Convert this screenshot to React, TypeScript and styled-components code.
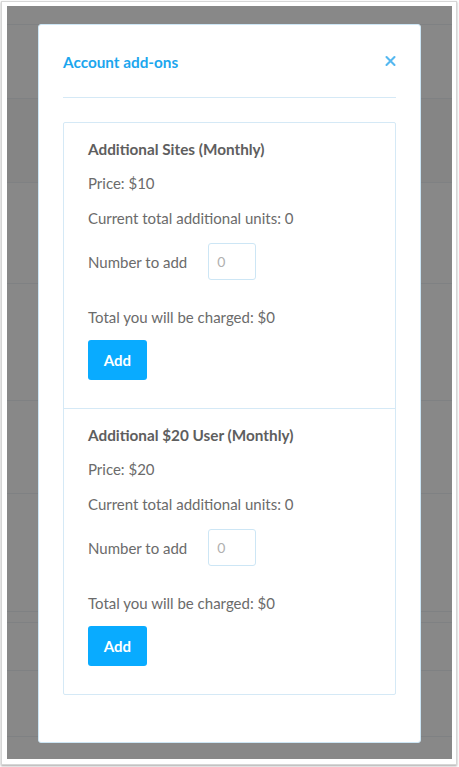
import styled, { createGlobalStyle } from 'styled-components';

const GlobalStyle = createGlobalStyle`
  html, body {
    margin: 0;
    padding: 0;
    background: #ffffff;
  }
  * {
    box-sizing: border-box;
  }
`;

const Frame = styled.div`
  width: 459px;
  height: 767px;
  padding: 1px 2px 2px 1px;
  background: #ffffff;
`;

const Window = styled.div`
  height: 100%;
  padding: 4px 4px 5px 5px;
  border: 1px solid #d6d6d6;
  box-shadow: 0 1px 2px rgba(0, 0, 0, 0.35);
  background: #ffffff;
`;

const Screen = styled.div`
  position: relative;
  height: 100%;
  background: #888888;
  padding: 18px 31px 16px 31px;
  font-family: 'Lato', 'Liberation Sans', sans-serif;
`;

const Backdrop = styled.div`
  position: absolute;
  inset: 0;
  display: flex;
  flex-direction: column;
`;

const BackdropRow = styled.div<{ $dark?: boolean }>`
  flex: none;
  border-bottom: 1px solid #7f8183;
  background: ${(p) => (p.$dark ? '#858585' : 'transparent')};
`;

const Modal = styled.div`
  position: relative;
  height: 100%;
  background: #ffffff;
  border: 1px solid #cde6f5;
  border-radius: 3px;
  padding: 0 24px;
`;

const Header = styled.div`
  display: flex;
  align-items: center;
  justify-content: space-between;
  height: 73px;
  padding-top: 2px;
  border-bottom: 1px solid #d5e9f6;
`;

const Title = styled.h2`
  margin: 0;
  font-size: 15.3px;
  font-weight: 700;
  color: #1ba6ee;
`;

const Close = styled.button`
  border: none;
  background: none;
  padding: 0;
  margin-bottom: 2px;
  width: 12px;
  height: 12px;
  display: flex;
  cursor: pointer;
`;

const Card = styled.div`
  margin-top: 24px;
  border: 1px solid #d5e9f6;
  border-radius: 2px;
`;

const Addon = styled.section`
  padding: 16px 24px 28px;
  border-top: 1px solid #d5e9f6;
  color: #6b6b6b;
  font-size: 15px;

  &:first-child {
    border-top: none;
  }
`;

const AddonName = styled.h3`
  margin: 0;
  height: 20px;
  line-height: 20px;
  font-size: 15.3px;
  font-weight: 700;
  color: #5e5e5e;
`;

const Line = styled.p<{ $gap: number }>`
  margin: ${(p) => p.$gap}px 0 0;
  height: 20px;
  line-height: 20px;
`;

const InputRow = styled.label`
  display: flex;
  align-items: center;
  gap: 21px;
  margin-top: 15px;
  height: 37px;
`;

const NumberInput = styled.input`
  width: 48px;
  height: 37px;
  padding: 0 8px;
  border: 1px solid #cde6f5;
  border-radius: 3px;
  font-family: inherit;
  font-size: 14px;
  color: #a0a0a0;
  outline: none;

  &::placeholder {
    color: #b0b0b0;
  }
`;

const AddButton = styled.button`
  display: block;
  margin-top: 13px;
  width: 59px;
  height: 40px;
  border: none;
  border-radius: 3px;
  background: #09abff;
  color: #ffffff;
  font-family: inherit;
  font-size: 15px;
  font-weight: 700;
  cursor: pointer;
`;

const rows = [
  { h: 19 },
  { h: 74 },
  { h: 84, dark: true },
  { h: 101 },
  { h: 117 },
  { h: 93 },
  { h: 118 },
  { h: 11 },
  { h: 48 },
  { h: 66 },
];

const addons = [
  { name: 'Additional Sites (Monthly)', price: 10 },
  { name: 'Additional $20 User (Monthly)', price: 20 },
];

function CloseIcon() {
  return (
    <svg width="12" height="12" viewBox="0 0 12 12">
      <path d="M2.5 2 L10.5 10 M10.5 2 L2.5 10" stroke="#55b8f0" strokeWidth="2.1" strokeLinecap="round" />
    </svg>
  );
}

export default function App() {
  return (
    <>
      <GlobalStyle />
      <Frame>
        <Window>
          <Screen>
            <Backdrop>
              {rows.map((r, i) => (
                <BackdropRow key={i} $dark={r.dark} style={{ height: r.h }} />
              ))}
            </Backdrop>
            <Modal>
              <Header>
                <Title>Account add-ons</Title>
                <Close aria-label="Close">
                  <CloseIcon />
                </Close>
              </Header>
              <Card>
                {addons.map((a) => (
                  <Addon key={a.name}>
                    <AddonName>{a.name}</AddonName>
                    <Line $gap={14}>Price: ${a.price}</Line>
                    <Line $gap={15}>Current total additional units: 0</Line>
                    <InputRow>
                      Number to add
                      <NumberInput type="text" placeholder="0" />
                    </InputRow>
                    <Line $gap={27}>Total you will be charged: $0</Line>
                    <AddButton>Add</AddButton>
                  </Addon>
                ))}
              </Card>
            </Modal>
          </Screen>
        </Window>
      </Frame>
    </>
  );
}
